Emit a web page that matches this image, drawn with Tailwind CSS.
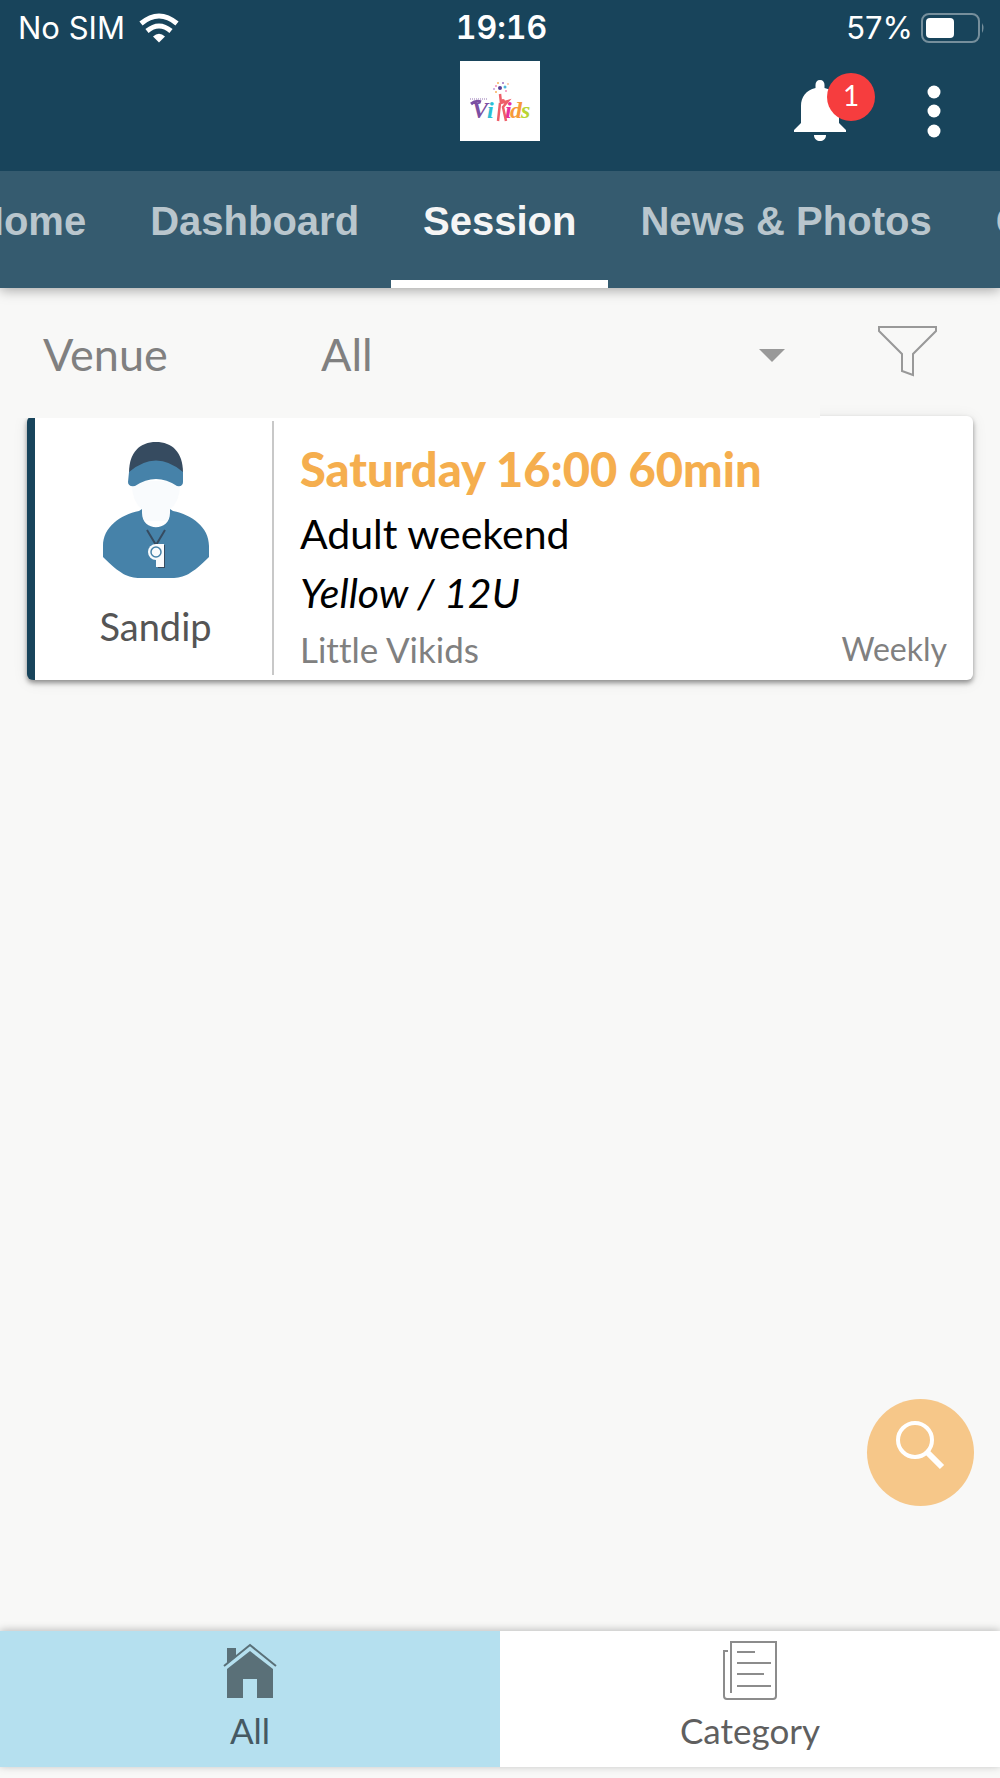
<!DOCTYPE html>
<html lang="en">
<head>
    <meta charset="UTF-8">
    <meta name="viewport" content="width=device-width, initial-scale=1.0">
    <title>Vikids - Session</title>

    <!-- Tailwind CSS -->
    <script src="https://cdn.jsdelivr.net/npm/@tailwindcss/browser@4"></script>
</head>
<body class="min-h-screen flex flex-col bg-[#f8f8f7] font-['Lato',sans-serif] [font-variant-ligatures:none]">

    <!-- Header -->
    <header class="relative z-30 bg-[#18445b] text-white">
        <!-- Status bar -->
        <div class="grid grid-cols-3 items-center h-[54px] pl-[18px] pr-[15px] text-[31px] leading-[56px] font-['Inter',sans-serif]">
            <div class="flex items-center gap-[14px]">
                <span>No SIM</span>
                <svg class="w-10 h-[30px]" viewBox="0 0 40 30" fill="none" stroke="currentColor" stroke-width="5">
                    <path d="M2 10.500Q20-4.500 38 10.500" />
                    <path d="M8 18Q20 8 32 18" />
                    <path d="M14 23.500Q20 18 26 23.500L20 29.500Z" fill="currentColor" stroke="none" />
                </svg>
            </div>
            <span class="text-center text-[32px] font-semibold tabular-nums">19:16</span>
            <div class="flex items-center justify-end gap-2">
                <span>57%</span>
                <svg class="w-16 h-[30px]" viewBox="0 0 64 30">
                    <rect x="1" y="1" width="57" height="28" rx="7" fill="none" stroke="#768f9c" stroke-width="2" />
                    <rect x="5" y="5" width="28" height="20" rx="4" fill="#fff" />
                    <path d="M61 10q3 5 0 10z" fill="#768f9c" />
                </svg>
            </div>
        </div>

        <!-- Logo and actions -->
        <div class="grid grid-cols-3 items-start h-[117px] pt-[7px]">
            <span></span>
            <svg class="w-20 h-20 justify-self-center bg-white" viewBox="0 0 80 80" role="img" aria-label="Vikids">
                <g font-family="Liberation Serif" font-style="italic" font-weight="bold" font-size="24">
                    <text x="12" y="57" fill="#7b4fa3">V</text>
                    <text x="27" y="57" fill="#2bbfd6">i</text>
                    <text x="45" y="57" fill="#e52fa0">i</text>
                    <text x="50" y="57" fill="#f79a3a">d</text>
                    <text x="61" y="57" fill="#b9d532">s</text>
                </g>
                <path d="M11 43q5-4 10-2" stroke="#7b4fa3" stroke-width="3" fill="none" />
                <path d="M10 38h17" stroke="#c9b9d8" stroke-width="2" stroke-dasharray="1 1" />
                <path d="M40 33l1 9 7-2-5 6 3 14M40 42l-2 18" stroke="#ee5f69" stroke-width="2.500" fill="none" />
                <circle cx="43" cy="40" r="2" fill="#ee5f69" />
                <circle cx="40" cy="27" r="2" fill="#5a3f96" />
                <circle cx="36" cy="25" r="1" fill="#f58bb5" />
                <circle cx="38" cy="22" r="1" fill="#f7b25a" />
                <circle cx="43" cy="22" r="1" fill="#9a6fc0" />
                <circle cx="45" cy="26" r="1.500" fill="#4fb7dd" />
                <circle cx="46" cy="30" r="1" fill="#f58bb5" />
                <circle cx="36" cy="31" r="1" fill="#f7b25a" />
                <circle cx="34" cy="28" r="1" fill="#c79add" />
                <circle cx="48" cy="23" r="1" fill="#f9c59a" />
            </svg>
            <div class="flex justify-end items-center gap-20 pt-[19px] pr-[59px]">
                <button type="button" class="relative" aria-label="Notifications">
                    <svg class="w-[54px] h-[62px]" viewBox="0 0 54 62" fill="currentColor">
                        <path d="M27 0c3 0 4.500 2 4.500 5v3C41 10 46 17 46 26v17l7 7v2H1v-2l7-7V26C8 17 13 10 22.500 8V5c0-3 1.500-5 4.500-5z" />
                        <path d="M21 55h12c0 4-3 6-6 6s-6-2-6-6z" />
                    </svg>
                    <span class="absolute -top-[7px] left-[34px] w-12 h-12 rounded-full bg-[#f63d3e] text-[28px] leading-[44px] text-center">1</span>
                </button>
                <button type="button" aria-label="More">
                    <svg class="w-[14px] h-[54px]" viewBox="0 0 14 54" fill="currentColor">
                        <circle cx="7" cy="8" r="6.500" />
                        <circle cx="7" cy="27" r="6.500" />
                        <circle cx="7" cy="47" r="6.500" />
                    </svg>
                </button>
            </div>
        </div>
    </header>

    <!-- Tabs -->
    <nav class="relative z-20 h-[117px] bg-[#355b6f] shadow-[0_2px_12px_rgba(0,0,0,0.35)]">
        <div class="flex h-full overflow-hidden text-[#b9c6cd] text-[40px] leading-[100px] font-bold whitespace-nowrap font-['Liberation_Sans',sans-serif]">
            <a href="#" class="shrink-0 px-8 -ml-[57px]">Home</a>
            <a href="#" class="shrink-0 px-8">Dashboard</a>
            <a href="#" class="shrink-0 px-8 text-[#f5f5f5] border-b-8 border-white" aria-current="page">Session</a>
            <a href="#" class="shrink-0 px-8">News &amp; Photos</a>
            <a href="#" class="shrink-0 px-8">Contact</a>
        </div>
    </nav>

    <!-- Sessions -->
    <main class="relative grow">
        <div class="flex items-center h-[130px] text-[#808080] text-[45px]">
            <div class="relative z-10 flex items-center w-[82%] h-full pl-[43px] pt-[4px] bg-[#f8f8f7]">
                <label for="venue" class="w-[278px] shrink-0">Venue</label>
                <select id="venue" class="grow appearance-none bg-transparent outline-none">
                    <option>All</option>
                </select>
                <svg class="absolute right-[35px] w-[26px] h-[13px] pointer-events-none" viewBox="0 0 26 13">
                    <path d="M0 0h26L13 13z" fill="#999" />
                </svg>
            </div>
            <button type="button" class="ml-[58px] mb-1" aria-label="Filter">
                <svg class="w-[60px] h-[52px]" viewBox="0 0 60 52" fill="none" stroke="#999" stroke-width="2">
                    <path d="M1 2h57v4L35 29v21l-11-4V29L1 6z" />
                </svg>
            </button>
        </div>

        <article class="flex mx-[27px] -mt-[2px] h-[264px] rounded-md border-l-8 border-[#18445b] bg-white shadow-[0_3px_5px_rgba(0,0,0,0.4),0_2px_16px_rgba(0,0,0,0.08)]">
            <div class="flex flex-col items-center w-[239px] shrink-0 my-[5px] pt-5 pl-1 border-r-2 border-[#c8c8c8]">
                <svg class="w-[108px] h-[138px]" viewBox="0 0 108 138">
                    <path d="M30 40q-1 20 10 28v12h28V68q11-8 10-28z" fill="#f9fbfd" />
                    <path d="M27 32C27 11 38 1 54 1s27 10 27 31z" fill="#364b60" />
                    <path d="M27 31q27-23 54 0v10q0 5-6 4-21-14-42 0-7 1-7-4z" fill="#4682a9" />
                    <path d="M1 116V105C1 86 18 74 37 70l3-2v4c0 19 28 19 28 0v-4l3 2c19 4 36 16 36 35v11C90 133 82 137 70 137H38C26 137 18 133 1 116z" fill="#4682a9" />
                    <path d="M45 89l9 15 9-15" fill="none" stroke="#364b60" stroke-width="2" />
                    <path d="M56 104h7v23h-7z" fill="#364b60" />
                    <path d="M54 103h8v23h-8z" fill="#f9fbfd" />
                    <circle cx="54" cy="111" r="8" fill="#f9fbfd" />
                    <circle cx="54" cy="111" r="5" fill="none" stroke="#4682a9" stroke-width="1.500" />
                </svg>
                <span class="mt-[20px] text-[38px] leading-[54px] text-[#555]">Sandip</span>
            </div>
            <div class="grow pl-[26px] pr-[26px] pt-[22px] text-[41px] leading-[59px] text-black">
                <h2 class="mb-1 text-[47px] leading-[62px] font-black text-[#f5ae4e]">Saturday 16:00 60min</h2>
                <p>Adult weekend</p>
                <p class="italic">Yellow / 12U</p>
                <div class="flex justify-between text-[35px] leading-[54px] text-[#808080]">
                    <span>Little Vikids</span>
                    <span class="text-[32px]">Weekly</span>
                </div>
            </div>
        </article>

        <button type="button" class="absolute right-[26px] bottom-[125px] w-[107px] h-[107px] rounded-full bg-[#f6c789]" aria-label="Search">
            <svg class="w-full h-full" viewBox="0 0 107 107" fill="none" stroke="#fff">
                <circle cx="48" cy="41" r="17" stroke-width="4" />
                <path d="M60 53l15 15" stroke-width="6" />
            </svg>
        </button>
    </main>

    <!-- Bottom navigation -->
    <nav class="grid grid-cols-2 h-[136px] mb-[11px] text-[35px] leading-[42px] text-[#5f5f5f] bg-white shadow-[0_-1px_8px_rgba(0,0,0,0.25)]">
        <a href="#" class="flex flex-col items-center pt-2 bg-[#b5e0ef] text-[#455962]">
            <svg class="w-[54px] h-[62px] mb-2" viewBox="0 0 54 62" fill="#5a7078">
                <path d="M27 12l23 18v29H34V40H20v19H4V30z" />
                <path d="M4 9h9v8l-9 7z" />
                <path d="M1 27L27 6l26 21" fill="none" stroke="#5a7078" stroke-width="2" />
            </svg>
            <span>All</span>
        </a>
        <a href="#" class="flex flex-col items-center pt-2">
            <svg class="w-[54px] h-[62px] mb-2" viewBox="0 0 54 62" fill="none" stroke="#8c8c8c" stroke-width="2">
                <path d="M8 54V3h45v54q0 3-3 3H4q-3 0-3-3V12h4" />
                <path d="M14 13h18M14 24h34M14 35h27M14 47h34" />
            </svg>
            <span>Category</span>
        </a>
    </nav>
</body>
</html>
